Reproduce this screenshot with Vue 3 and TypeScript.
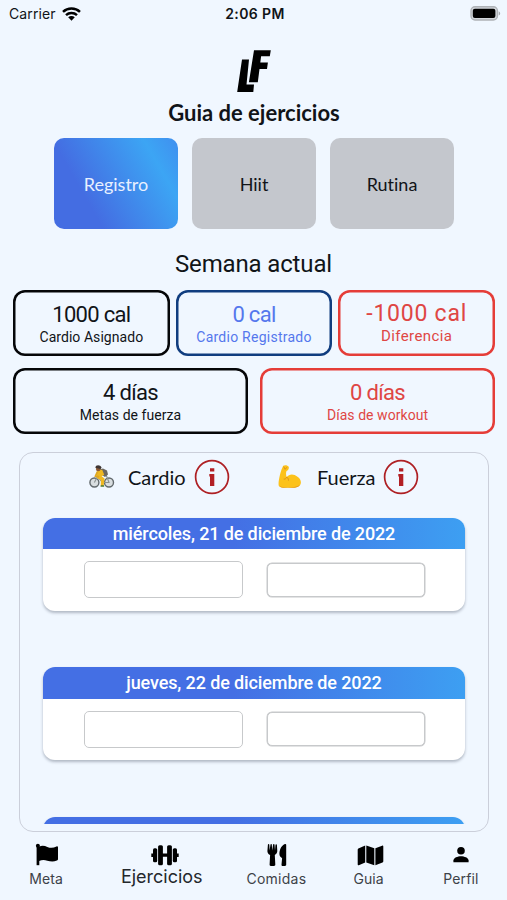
<script setup lang="ts">
interface Stat {
  value: string
  label: string
  tone: string
}

const tabs: string[] = ['Registro', 'Hiit', 'Rutina']
const calories: Stat[] = [
  { value: '1000 cal', label: 'Cardio Asignado', tone: 'black' },
  { value: '0 cal', label: 'Cardio Registrado', tone: 'blue' },
  { value: '-1000 cal', label: 'Diferencia', tone: 'red wide' },
]
const strength: Stat[] = [
  { value: '4 días', label: 'Metas de fuerza', tone: 'black' },
  { value: '0 días', label: 'Días de workout', tone: 'red' },
]
const days: string[] = [
  'miércoles, 21 de diciembre de 2022',
  'jueves, 22 de diciembre de 2022',
  '',
]
</script>

<template>
  <main class="screen">
    <header class="status">
      <div class="carrier">
        <span>Carrier</span>
        <svg width="19" height="14" viewBox="0 0 19 14">
          <g fill="none" stroke="#000" stroke-width="2.5">
            <path d="M1 4.9C5.7.5 13.3.5 18 4.9" />
            <path d="M4 8.1c3.1-2.8 7.9-2.8 11 0" />
          </g>
          <path d="M6.2 10.3c1.9-1.6 4.7-1.6 6.6 0L9.5 13.7z" />
        </svg>
      </div>
      <span class="time">2:06 PM</span>
      <svg class="battery" width="31" height="15" viewBox="0 0 31 15">
        <rect x="1" y=".8" width="26.4" height="13.2" rx="4" fill="#d3d7dc" stroke="#aeb2b7" stroke-width="1.4" />
        <rect x="2.8" y="2.8" width="22.6" height="9.2" rx="2" />
        <path d="M28.7 5.2c2 .8 2 3.6 0 4.4z" fill="#a6aaae" />
      </svg>
    </header>

    <svg class="logo" width="34" height="43" viewBox="0 0 34 43">
      <path d="M5 9.6h7L9.500 34.500h7.500L16.300 42H.2z" />
      <path d="M17 .2h16.800l-1 6.100h-8.700l-.8 6.200h7.600l-.9 6.400h-7.500L20.800 32.200h-8.900z" />
    </svg>
    <h1>Guia de ejercicios</h1>

    <nav class="tabs">
      <button v-for="(tab, i) in tabs" :key="tab" :class="{ active: i === 0 }">{{ tab }}</button>
    </nav>

    <h2>Semana actual</h2>

    <section class="stats">
      <div class="row three">
        <div v-for="s in calories" :key="s.label" class="stat" :class="s.tone">
          <strong>{{ s.value }}</strong>
          <span>{{ s.label }}</span>
        </div>
      </div>
      <div class="row two">
        <div v-for="s in strength" :key="s.label" class="stat" :class="s.tone">
          <strong>{{ s.value }}</strong>
          <span>{{ s.label }}</span>
        </div>
      </div>
    </section>

    <section class="panel">
      <div class="legend">
        <div class="kind">
          <svg class="emoji" width="26" height="24" viewBox="0 0 26 24">
            <g fill="#d9dee0" stroke="#62696c" stroke-width="1.4">
              <circle cx="5.4" cy="17.5" r="4.5" />
              <circle cx="20" cy="17.5" r="4.5" />
            </g>
            <path d="M5.4 17.5l3-6 5 6h6.600l-3-8" fill="none" stroke="#8b9290" stroke-width="1.1" />
            <path d="M10 4.500l4-1 4 2 1 4-3 2.500-3-2z" fill="#6b6760" />
            <path d="M8.2 5.200l5-.4 2 5-2.600 1.400 3 2.200-1 7.700h-2.900l.2-5.800-4.200-2.300z" fill="#efb822" />
            <path d="M8.500 6.500l-2 4.500 3.600.8" fill="none" stroke="#dda722" stroke-width="1.800" />
            <circle cx="9.200" cy="3.900" r="2.300" fill="#8a5935" />
            <path d="M6.300 2.700C6.600-.5 11.100-.6 12.600 2.500l-1 1.400z" fill="#3e3532" />
            <path d="M11.800 20.200h3.300v1.600h-3.600z" fill="#4d7730" />
          </svg>
          <span class="kind-name">Cardio</span>
          <svg class="info" width="36" height="36" viewBox="0 0 36 36">
            <circle cx="18" cy="18" r="16.4" fill="none" stroke="#ae2024" stroke-width="1.7" />
            <path d="M16 9.300h4.300v3.300H16zM15.300 15h5v11.900H16v-9.500h-.7z" fill="#b21f24" />
          </svg>
        </div>
        <div class="kind">
          <svg class="emoji arm" width="26" height="24" viewBox="0 0 26 24">
            <path d="M6.200.8C7.500-.2 11 .1 11.700 1.800c.5 1.500-.4 3.600-2.200 4.100-.8 2.300-.5 4.500.2 6.200 2-2.500 5-3.500 8-2 4 1.800 7 5.200 6 8.600-1 3.500-6 4.100-11 4.100-4.500 0-9 .5-10.800-1.800C.6 18.900 3.300 6.200 6.200.8z" fill="#fcc21b" />
            <path d="M2.100 20.800c3 2.200 15.500 2.300 21-.9-1.400 2.500-5.900 2.900-10.400 2.900-4.500 0-9.200.5-10.600-2z" fill="#e69b19" />
            <path d="M6.700 1.700l1.500 2.600 1.600-2M9.700 12.100c-.5 1.500-1.800 2.200-3 2M10 12.200c1 1 1.600 2 1.500 3.400" fill="none" stroke="#dc911c" stroke-width="1" />
          </svg>
          <span class="kind-name">Fuerza</span>
          <svg class="info" width="36" height="36" viewBox="0 0 36 36">
            <circle cx="18" cy="18" r="16.4" fill="none" stroke="#ae2024" stroke-width="1.7" />
            <path d="M16 9.300h4.300v3.300H16zM15.300 15h5v11.900H16v-9.500h-.7z" fill="#b21f24" />
          </svg>
        </div>
      </div>

      <div class="days">
        <article v-for="(day, i) in days" :key="i" class="day">
          <h3>{{ day }}</h3>
          <div class="fields">
            <input type="text" class="cardio" />
            <input type="text" class="fuerza" />
          </div>
        </article>
      </div>
    </section>

    <nav class="bottom">
      <a class="goal">
        <svg width="24" height="24" viewBox="0 0 24 24">
          <circle cx="2.900" cy="2.700" r="2" />
          <path d="M1.600 3h2.700v19.200H1.600z" />
          <path d="M4 3.700c3-1.500 5.700-.9 8.300.2 3.200 1.300 5.900 1.200 9.200-.4.800-.4 1.500 0 1.500.8v11.800c0 .8-.4 1.200-1.100 1.500-3.500 1.500-6.500 1-9.600.1-3.100-.9-5.300-.8-8.300.3z" />
        </svg>
        <span>Meta</span>
      </a>
      <a class="current">
        <svg width="28" height="24" viewBox="0 0 28 24">
          <rect x="7.100" y="2.200" width="4.800" height="20" rx="1.500" />
          <rect x="16.100" y="2.200" width="4.800" height="20" rx="1.500" />
          <rect x="2" y="5.200" width="4.200" height="14" rx="1.500" />
          <rect x="21.800" y="5.200" width="4.200" height="14" rx="1.500" />
          <path d="M.3 10.500h2.500v3.400H.3zM11 10.400h6v3.400h-6zM25.200 10.500h2.500v3.400h-2.500z" />
        </svg>
        <span>Ejercicios</span>
      </a>
      <a class="meals">
        <svg width="20" height="24" viewBox="0 0 20 24">
          <path d="M.9 1.700c.1-.8 1.400-.8 1.400.1l.3 5.700.9-5.900c.1-.7 1.300-.7 1.300 0l.4 5.900.9-5.900c.1-.7 1.300-.7 1.400 0l.5 5.900.5-5.800c.1-.8 1.300-.7 1.400.1l.4 6.200c0 1.900-1.200 3.300-2.500 4l.5 9.600c0 1-.5 1.300-1.300 1.300H3.800c-.8 0-1.300-.5-1.200-1.300l.5-9.600C1.600 11.200.3 9.700.4 7.900z" />
          <path d="M19.200 1.800v20c0 .7-.5 1.200-1.200 1.200h-2.300c-.8 0-1.200-.6-1.200-1.300l.6-6.500c-1.500-1-2.800-2.200-2.700-4.400 0-5.200 3.100-9.400 6-9.800.5 0 .8.300.8.800z" />
        </svg>
        <span>Comidas</span>
      </a>
      <a class="guide">
        <svg width="27" height="24" viewBox="0 0 27 24">
          <path d="M1.400 5.500l6.800-2.900v17l-6.400 2.600c-.7.300-1.100 0-1.100-.7V6.700c0-.6.200-1 .7-1.200zM9.300 2.600l8 2.700v16.900l-8-2.600zM18.400 5.300l6.700-2.600c.7-.3 1.200 0 1.200.7v14.800c0 .6-.2 1-.8 1.200l-7.100 2.800z" />
        </svg>
        <span>Guia</span>
      </a>
      <a>
        <svg width="24" height="24" viewBox="0 0 24 24">
          <circle cx="12" cy="7.700" r="3.800" />
          <path d="M4.400 19.200v-1.600c0-2.900 4.300-4.400 7.600-4.400s7.600 1.500 7.600 4.400v1.600z" />
        </svg>
        <span>Perfil</span>
      </a>
    </nav>
  </main>
</template>

<style>
body {
  margin: 0;
  background: #f0f7ff;
}
</style>

<style scoped>
* {
  box-sizing: border-box;
}
.screen {
  display: flex;
  flex-direction: column;
  width: 507px;
  height: 900px;
  overflow: hidden;
  background: #f0f7ff;
  color: #111418;
  font-family: Roboto, sans-serif;
  font-variant-ligatures: none;
}
.status {
  display: grid;
  grid-template-columns: 1fr auto 1fr;
  align-items: center;
  height: 28px;
  padding: 0 6px 0 9px;
  font-family: Inter, sans-serif;
  font-size: 14px;
  line-height: 28px;
}
.carrier {
  display: flex;
  align-items: center;
  gap: 6px;
}
.carrier span {
  letter-spacing: 0.1px;
}
.time {
  font-weight: 600;
  letter-spacing: 0.4px;
}
.battery {
  justify-self: end;
  margin-top: -2px;
}
.logo {
  align-self: center;
  margin-top: 22px;
}
h1 {
  margin: 7px 0 0 1px;
  text-align: center;
  font-family: Lato, sans-serif;
  font-size: 22px;
  font-weight: 700;
  line-height: 26px;
}
.tabs {
  display: flex;
  justify-content: center;
  gap: 14px;
  margin: 12px 0 0 1px;
}
.tabs button {
  width: 124px;
  height: 91px;
  padding: 0;
  border: 0;
  border-radius: 10px;
  background: #c4c7cd;
  color: #111418;
  font-family: Lato, sans-serif;
  font-size: 18px;
  line-height: 24px;
  font-variant-ligatures: none;
}
.tabs .active {
  background: linear-gradient(60deg, #446de2 28%, #3ca5f4 80%, #408fef 100%);
  color: #e8f0ff;
}
h2 {
  margin: 20px 0 0;
  text-align: center;
  font-size: 24px;
  font-weight: 400;
  line-height: 30px;
  letter-spacing: -0.15px;
}
.stats {
  display: flex;
  flex-direction: column;
  gap: 12px;
  padding: 11px 12px 0 13px;
}
.row {
  display: grid;
}
.three {
  grid-template-columns: repeat(3, 1fr);
  gap: 6px;
}
.two {
  grid-template-columns: repeat(2, 1fr);
  gap: 12px;
}
.stat {
  display: flex;
  flex-direction: column;
  align-items: center;
  height: 66px;
  padding-top: 11px;
  border-radius: 12px;
  box-shadow: inset 0 0 0 2.5px var(--edge);
  color: #111418;
}
.stat strong {
  font-size: 22px;
  font-weight: 400;
  line-height: 28px;
  letter-spacing: -0.7px;
}
.stat span {
  font-size: 14px;
  font-weight: 400;
  line-height: 16px;
  letter-spacing: 0.05px;
}
.stat.black {
  --edge: #050608;
}
.stat.blue {
  --edge: #103d7f;
  color: #5577ed;
}
.stat.blue span {
  letter-spacing: 0.25px;
}
.stat.red {
  --edge: #e53d38;
  color: #df4644;
}
.stat.wide {
  padding-top: 10px;
}
.stat.wide strong {
  font-size: 23px;
  line-height: 27px;
  letter-spacing: 0.75px;
}
.stat.wide span {
  font-size: 15px;
  line-height: 18px;
  letter-spacing: 0.4px;
}
.panel {
  display: flex;
  flex-direction: column;
  height: 380px;
  margin: 18px 18px 0 19px;
  padding: 0 23px 7px;
  border: 1.5px solid #cbcfda;
  border-radius: 14px;
}
.legend {
  display: flex;
  flex: none;
  height: 63.5px;
  padding: 5px 0 0 46px;
}
.kind {
  display: flex;
  align-items: flex-start;
  width: 190px;
}
.emoji {
  margin-top: 7px;
}
.arm {
  margin-right: 1px;
}
.kind-name {
  width: 66px;
  margin-left: 13px;
  font-family: Lato, sans-serif;
  font-size: 20px;
  line-height: 38px;
}
.info {
  margin-top: 0.5px;
}
.days {
  flex: 1;
  min-height: 0;
  margin: 0 -4px;
  padding: 1px 4px 0;
  overflow: hidden;
}
.day {
  width: 422px;
  height: 93px;
  margin-bottom: 56.5px;
  overflow: hidden;
  border-radius: 12px;
  background: #fff;
  box-shadow: 0 2px 3px rgba(30, 40, 60, 0.3);
}
h3 {
  height: 31.5px;
  margin: 0;
  background: linear-gradient(90deg, #446fe4 45%, #3d9ff2);
  color: #fff;
  text-align: center;
  font-size: 18px;
  font-weight: 500;
  line-height: 32px;
  letter-spacing: -0.12px;
}
.fields {
  display: flex;
  align-items: center;
  justify-content: center;
  gap: 24px;
  height: 61px;
}
.fields input {
  width: 159px;
  height: 37px;
  padding: 0 8px;
  border: 1px solid #c7c9cb;
  border-radius: 5px;
  background: #fff;
}
.fields .fuerza {
  width: 158px;
  height: 34px;
  box-shadow: 0 0 0 0.5px #c7c9cb;
}
.bottom {
  display: flex;
  height: 68px;
  padding-top: 11px;
}
.bottom a {
  display: flex;
  flex-direction: column;
  align-items: center;
  width: 92.25px;
  color: #3d4248;
  font-family: Inter, sans-serif;
  font-size: 14px;
  line-height: 20px;
}
.bottom svg {
  flex: none;
}
.bottom span {
  margin-top: 2px;
  letter-spacing: 0.1px;
}
.bottom .goal svg {
  margin-left: 1px;
}
.bottom .meals svg {
  margin-left: 1px;
}
.bottom .guide svg {
  margin-left: 3px;
}
.bottom .meals span {
  letter-spacing: 0.25px;
}
.bottom .current {
  width: 138px;
  color: #24282c;
  font-size: 18px;
}
.bottom .current svg {
  margin-left: 7px;
}
.bottom .current span {
  margin-top: 0;
  margin-left: 1px;
  letter-spacing: 0;
}
</style>
